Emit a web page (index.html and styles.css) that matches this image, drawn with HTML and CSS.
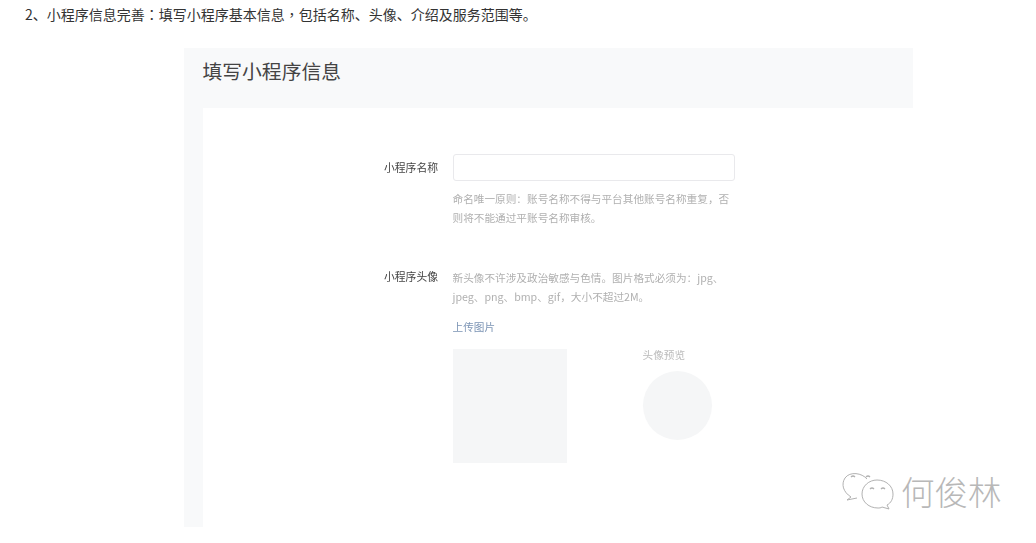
FILE: index.html
```html
<!DOCTYPE html>
<html lang="zh-CN">
<head>
<meta charset="utf-8">
<title>填写小程序信息</title>
<link rel="stylesheet" href="styles.css">
</head>
<body>
<p class="intro">2、小程序信息完善<span class="cp" lang="zh-TW">：</span>填写小程序基本信息<span class="cp" lang="zh-TW">，</span>包括名称、头像、介绍及服务范围等。</p>
<section class="shot">
  <h1 class="shot-title">填写小程序信息</h1>
  <div class="sheet">
    <div class="row row-name">
      <div class="label">小程序名称</div>
      <div class="field">
        <div class="input"></div>
        <p class="tip">命名唯一原则：账号名称不得与平台其他账号名称重复，否则将不能通过平账号名称审核。</p>
      </div>
    </div>
    <div class="row row-avatar">
      <div class="label">小程序头像</div>
      <div class="field">
        <p class="tip">新头像不许涉及政治敏感与色情。图片格式必须为：jpg、jpeg、png、bmp、gif，大小不超过2M。</p>
        <a class="upload">上传图片</a>
        <div class="previews">
          <div class="square"></div>
          <div class="preview">
            <div class="preview-label">头像预览</div>
            <div class="circle"></div>
          </div>
        </div>
      </div>
    </div>
  </div>
</section>
<div class="watermark">
  <svg class="wm-icon" width="52" height="42" viewBox="0 0 52 42" fill="none" stroke="#b2b2b2" stroke-width="1">
    <path d="M25 9C20 3 8 1 3 8C-1 14 1 22 9 27L5 30L15 28"/>
    <path d="M36 38C27 38 20 32 20 24C20 16 27 10 35 10C44 10 51 16 51 24C51 29 49 33 45 35L47 39L40 37C39 38 37 38 36 38Z"/>
    <path d="M9 7Q11 5 13 7M24 7Q26 5 28 7M28 19Q30 17 32 19M39 19Q41 17 43 19" stroke-width="1.3"/>
  </svg>
  <span class="wm-text">何俊林</span>
</div>
</body>
</html>
```
FILE: styles.css
```css
html, body { margin: 0; padding: 0; }
body {
  width: 1036px;
  height: 543px;
  overflow: hidden;
  position: relative;
  background: #fff;
  font-family: "Noto Sans CJK SC", "Liberation Sans", sans-serif;
}
.intro {
  margin: 0;
  padding: 5px 0 0 25px;
  height: 48px;
  box-sizing: border-box;
  font-size: 14px;
  line-height: 19px;
  color: #333;
}
.cp { font-family: "Noto Sans CJK TC", sans-serif; }
.shot {
  margin-left: 184px;
  width: 729px;
  height: 479px;
  background: #f8f9fa;
  display: flex;
  flex-direction: column;
}
.shot-title {
  margin: 0;
  padding: 9px 0 0 18.5px;
  height: 60px;
  box-sizing: border-box;
  font-size: 19.8px;
  line-height: 27px;
  font-weight: 400;
  color: #444;
}
.sheet {
  margin-left: 19px;
  flex: 1;
  background: #fff;
  padding-top: 46px;
}
.row { display: flex; }
.label {
  width: 250px;
  box-sizing: border-box;
  text-align: right;
  padding-right: 15px;
  font-size: 10.8px;
  line-height: 16px;
  color: #444;
  filter: blur(0.3px);
}
.row-name .label { padding-top: 5px; }
.row-avatar .label { margin-top: -1px; }
.field { width: 282px; margin-left: -0.5px; }
.input {
  height: 27px;
  box-sizing: border-box;
  border: 1px solid #e9e9ec;
  border-radius: 3px;
}
.tip {
  margin: 0;
  font-size: 10.65px;
  line-height: 18.5px;
  color: #b0b0b0;
  filter: blur(0.3px);
}
.row-name .tip { margin-top: 9px; }
.row-avatar { margin-top: 42px; }
.upload {
  display: block;
  margin-top: 13px;
  font-size: 10.65px;
  line-height: 16px;
  color: #7c94b5;
  filter: blur(0.3px);
}
.previews {
  display: flex;
  margin-top: 14px;
}
.square {
  width: 114px;
  height: 114px;
  background: #f5f6f7;
}
.preview { margin-left: 76px; }
.preview-label {
  font-size: 10.65px;
  line-height: 12px;
  color: #bbb;
  filter: blur(0.3px);
}
.circle {
  width: 69px;
  height: 69px;
  margin-top: 10px;
  border-radius: 50%;
  background: #f5f6f7;
}
.watermark {
  position: absolute;
  left: 842px;
  top: 470px;
  display: flex;
  align-items: center;
  gap: 7px;
}
.wm-text {
  font-size: 33.5px;
  line-height: 40px;
  font-weight: 300;
  color: #b8b8b8;
}
```
